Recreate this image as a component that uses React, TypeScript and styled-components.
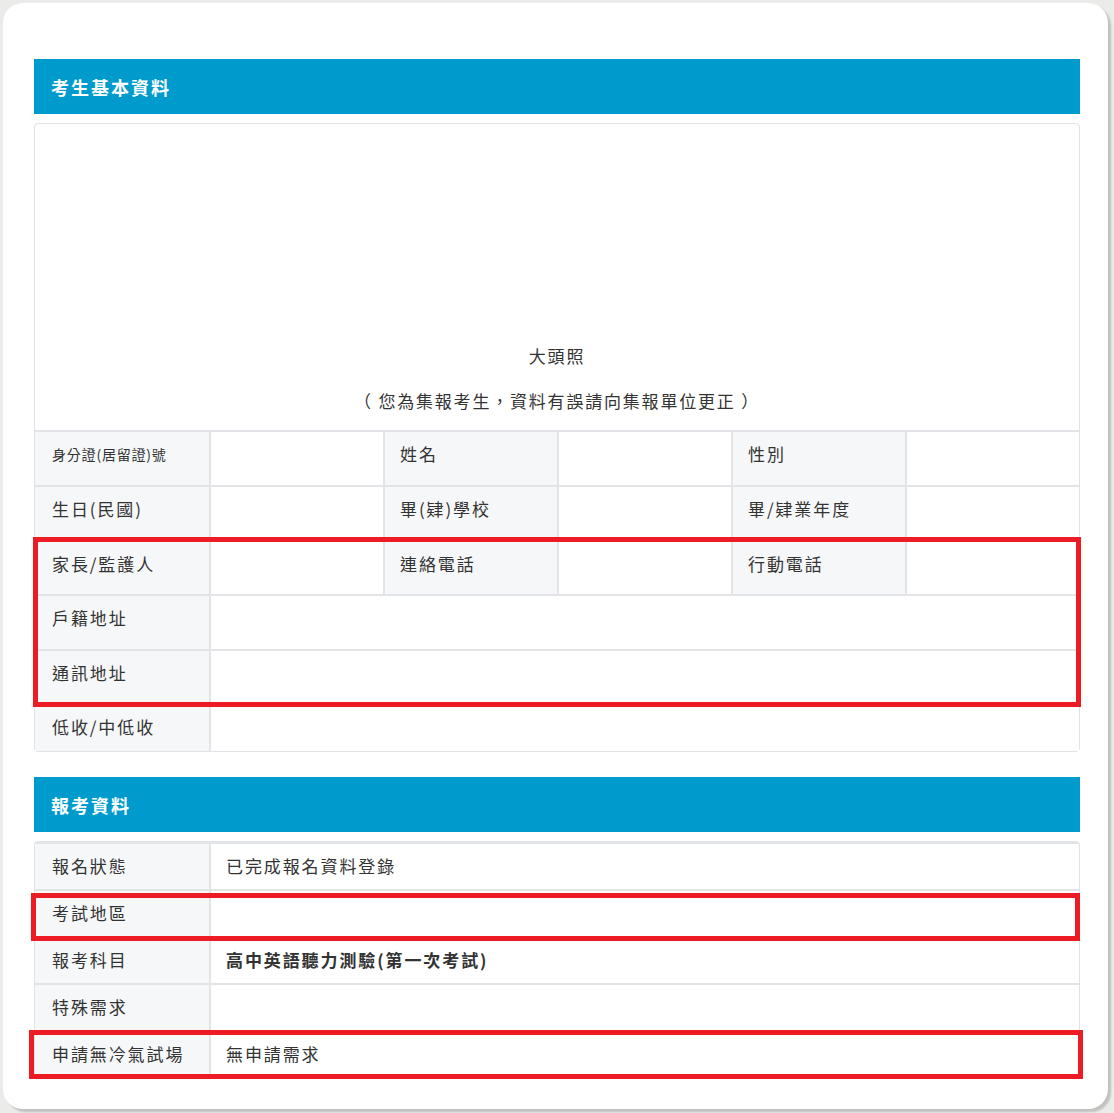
import styled, { createGlobalStyle } from "styled-components";

const GlobalStyle = createGlobalStyle`
  html, body {
    margin: 0;
    padding: 0;
  }
  body {
    background: #ebebea;
    font-family: "Noto Sans CJK TC", "Noto Sans", sans-serif;
    color: #333;
  }
`;

const Page = styled.div`
  padding: 3px 6px 6px 3px;
`;

const Card = styled.div`
  width: 1105px;
  box-sizing: border-box;
  background: #fff;
  border-radius: 20px;
  box-shadow: 3px 3px 2px rgba(0, 0, 0, 0.18);
  padding: 56px 28px 31px 31px;
`;

const Section = styled.section`
  & + & {
    margin-top: 25px;
  }
`;

const SectionTitle = styled.h2`
  margin: 0 0 9px;
  height: 55px;
  display: flex;
  align-items: center;
  padding-left: 17px;
  background: #009bcd;
  color: #fff;
  font-size: 18px;
  font-weight: 700;
  letter-spacing: 2px;
`;

const Table = styled.div`
  border: 1px solid #dfe2e6;
  border-radius: 4px;
  background: #fff;
`;

const Photo = styled.div`
  height: 306px;
  box-sizing: border-box;
  display: flex;
  flex-direction: column;
  align-items: center;
  justify-content: flex-end;
  gap: 21px;
  padding-bottom: 17px;
  font-size: 17px;
  line-height: 24px;
  letter-spacing: 1.8px;
`;

const Row = styled.div<{ $cols: number; $height: number }>`
  display: grid;
  grid-template-columns: ${(p) => (p.$cols === 6 ? "repeat(6, 1fr)" : "174px 1fr")};
  height: ${(p) => p.$height}px;
  box-sizing: border-box;
  border-top: 2px solid #e2e4e8;
`;

const Cell = styled.div<{ $label?: boolean; $span?: number; $small?: boolean; $bold?: boolean }>`
  grid-column: span ${(p) => p.$span ?? 1};
  padding: 10px 16px 0 17px;
  line-height: 24px;
  font-size: ${(p) => (p.$small ? "14px" : "17px")};
  letter-spacing: ${(p) => (p.$small ? "0.8px" : "1.9px")};
  font-weight: ${(p) => (p.$bold ? 700 : 400)};
  background: ${(p) => (p.$label ? "#f6f7f9" : "#fff")};
  white-space: nowrap;
  & + & {
    border-left: 2px solid #e2e4e8;
    padding-left: 15px;
  }
`;

const Marked = styled.div`
  position: relative;
`;

const Highlight = styled.div<{ $t: number; $r: number; $b: number; $l: number }>`
  position: absolute;
  top: ${(p) => p.$t}px;
  right: ${(p) => p.$r}px;
  bottom: ${(p) => p.$b}px;
  left: ${(p) => p.$l}px;
  border: 5px solid #ed1c24;
  pointer-events: none;
`;

type Pair = { label: string; value?: string; small?: boolean };

const InfoRow = ({ items, height }: { items: Pair[]; height: number }) => (
  <Row $cols={6} $height={height}>
    {items.map((it) => [
      <Cell key={it.label} $label $small={it.small}>
        {it.label}
      </Cell>,
      <Cell key={it.label + "-v"} $span={items.length === 1 ? 5 : 1}>
        {it.value}
      </Cell>,
    ])}
  </Row>
);

const ExamRow = ({ label, value, bold }: { label: string; value?: string; bold?: boolean }) => (
  <Row $cols={2} $height={47}>
    <Cell $label>{label}</Cell>
    <Cell $bold={bold}>{value}</Cell>
  </Row>
);

const App = () => {
  return (
    <Page>
      <GlobalStyle />
      <Card>
        <Section>
          <SectionTitle>考生基本資料</SectionTitle>
          <Table>
            <Photo>
              <div>大頭照</div>
              <div>（ 您為集報考生，資料有誤請向集報單位更正 ）</div>
            </Photo>
            <InfoRow
              height={55}
              items={[{ label: "身分證(居留證)號", small: true }, { label: "姓名" }, { label: "性別" }]}
            />
            <InfoRow
              height={55}
              items={[{ label: "生日(民國)" }, { label: "畢(肄)學校" }, { label: "畢/肄業年度" }]}
            />
            <Marked>
              <InfoRow
                height={54}
                items={[{ label: "家長/監護人" }, { label: "連絡電話" }, { label: "行動電話" }]}
              />
              <InfoRow height={55} items={[{ label: "戶籍地址" }]} />
              <InfoRow height={54} items={[{ label: "通訊地址" }]} />
              <Highlight $t={-3} $r={-2} $b={-4} $l={-2} />
            </Marked>
            <InfoRow height={48} items={[{ label: "低收/中低收" }]} />
          </Table>
        </Section>

        <Section>
          <SectionTitle>報考資料</SectionTitle>
          <Table>
            <ExamRow label="報名狀態" value="已完成報名資料登錄" />
            <Marked>
              <ExamRow label="考試地區" />
              <Highlight $t={4} $r={-1} $b={-5} $l={-4} />
            </Marked>
            <ExamRow label="報考科目" value="高中英語聽力測驗(第一次考試)" bold />
            <ExamRow label="特殊需求" />
            <Marked>
              <ExamRow label="申請無冷氣試場" value="無申請需求" />
              <Highlight $t={0} $r={-4} $b={-2} $l={-6} />
            </Marked>
          </Table>
        </Section>
      </Card>
    </Page>
  );
};

export default App;
